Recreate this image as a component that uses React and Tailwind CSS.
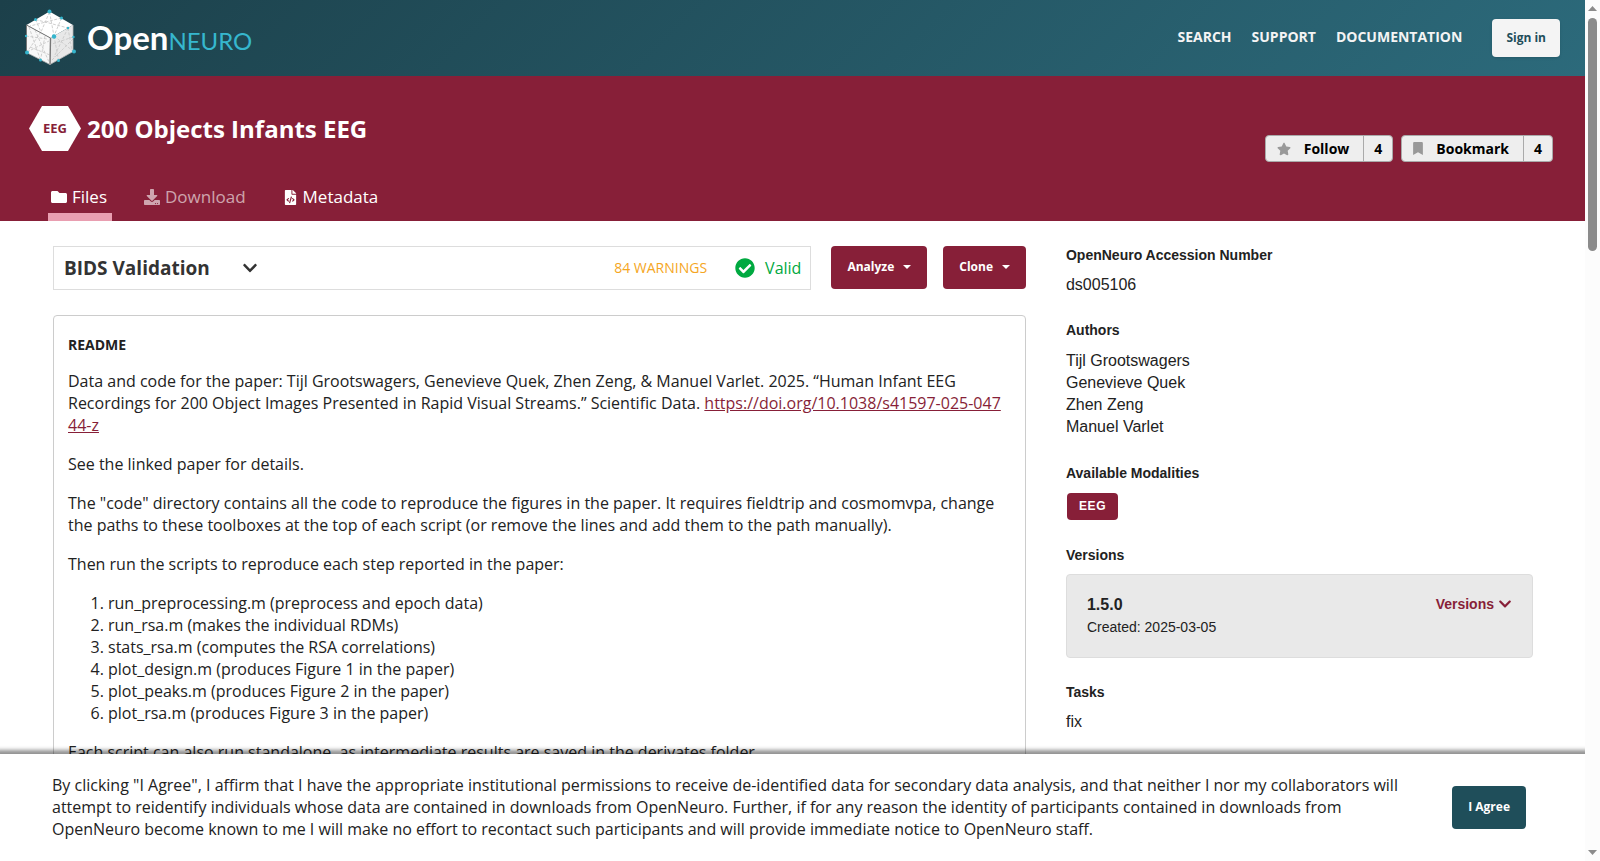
import React from 'react';
import { useState } from 'react';
import {
    FaBookmark,
    FaCheckCircle,
    FaChevronDown,
    FaDownload,
    FaFileCode,
    FaFolder,
    FaStar,
} from 'react-icons/fa';

const NAV_LINKS = ['SEARCH', 'SUPPORT', 'DOCUMENTATION'];

const AUTHORS = ['Tijl Grootswagers', 'Genevieve Quek', 'Zhen Zeng', 'Manuel Varlet'];

const SCRIPTS = [
    'run_preprocessing.m (preprocess and epoch data)',
    'run_rsa.m (makes the individual RDMs)',
    'stats_rsa.m (computes the RSA correlations)',
    'plot_design.m (produces Figure 1 in the paper)',
    'plot_peaks.m (produces Figure 2 in the paper)',
    'plot_rsa.m (produces Figure 3 in the paper)',
];

const CUBE_NODES = [
    [24.5, 2.5, 2],
    [10.5, 10.5, 1.5],
    [36.5, 9, 1.5],
    [43, 19, 1.2],
    [29, 27.5, 2.2],
    [1, 27, 1.2],
    [48.5, 28, 1.2],
    [2, 43.5, 2],
    [49, 42.5, 2],
    [15.5, 51, 1.5],
    [33.5, 51.5, 1.5],
];

const LogoCube = () => (
    <svg width="52" height="58" viewBox="0 0 52 58" aria-hidden="true">
        <path d="M24.5 2.5 48 16 25.5 29 1.5 16z" fill="#ffffff" />
        <path d="M1.5 16 25.5 29 25 55.5 1.5 43.5z" fill="#f8f8f8" />
        <path d="M48 16 25.5 29 25 55.5 48 42.5z" fill="#e8e8e8" />
        <path
            d="M24.5 3 16 23M24.5 3 29 27M10.5 10.5 43 19M10.5 10.5 16 23M36.5 9 5 17M36.5 9 29 27M1 27 22 30M4 18 15.5 51M16 23 2 43M20 27 15.5 51M2 43 24 32M5 38 25 46M10 21 24 53M29 27 33.5 51M43 19 29 48M29 27 48 42M48 28 27 35M43 19 47 42M27 51 48 30"
            fill="none"
            stroke="#c9c9c9"
            strokeWidth="0.9"
            strokeDasharray="3 1.5"
        />
        <path d="M1.5 43.5V16L25.5 29" fill="none" stroke="#777777" strokeWidth="1" />
        <path d="M25.5 29 25 55.5" fill="none" stroke="#777777" strokeWidth="1.4" />
        <path d="M1.5 43.5 25 55.5 48 42.5V16" fill="none" stroke="#b5b5b5" strokeWidth="0.8" />
        {CUBE_NODES.map(([cx, cy, r]) => (
            <circle key={`${cx}-${cy}`} cx={cx} cy={cy} r={r} fill="#34b5cd" />
        ))}
    </svg>
);

const Header = () => (
    <header className="flex h-[76px] shrink-0 items-center justify-between bg-[linear-gradient(135deg,#1c404a,#2c6a7b)] px-[25px]">
        <a href="#home" className="flex items-center" aria-label="OpenNeuro">
            <LogoCube />
            <span className="ml-[10px] flex items-baseline pb-0.5 font-['Lato',sans-serif] leading-10">
                <span className="text-[33px] font-bold text-white">Open</span>
                <span className="text-2xl text-[#36b7ce]">NEURO</span>
            </span>
        </a>
        <nav className="flex items-center gap-5 text-sm font-bold text-[#f4f4f4]">
            {NAV_LINKS.map((link) => (
                <a key={link} href={`#${link.toLowerCase()}`} className="pb-0.5">
                    {link}
                </a>
            ))}
            <button
                type="button"
                className="ml-[10px] h-[38px] cursor-pointer rounded bg-[#f4f4f4] px-[14px] text-xs font-bold text-[#1f4e5a] shadow"
            >
                Sign in
            </button>
        </nav>
    </header>
);

const CountButton = ({ icon, label, count }) => (
    <button
        type="button"
        className="flex h-[27px] cursor-pointer items-stretch rounded border border-[#aaaaaa] bg-[#eeeeee] text-sm font-bold text-black"
    >
        <span className="flex items-center gap-[13px] pl-[11px] pr-[14px]">
            <span className="text-[#999999]">{icon}</span>
            {label}
        </span>
        <span className="flex items-center border-l border-[#aaaaaa] px-[10px]">{count}</span>
    </button>
);

const Tab = ({ icon, label, active, muted }) => (
    <li>
        <a
            href={`#${label.toLowerCase()}`}
            className={`flex h-9 items-start gap-[5px] border-b-8 pl-[3px] pr-[5px] text-[17px] leading-6 ${
                active ? 'border-[#e99fb1]' : 'border-transparent'
            } ${muted ? 'text-white/60' : 'text-white'}`}
        >
            <span className="flex h-6 items-center text-base">{icon}</span>
            {label}
        </a>
    </li>
);

const DatasetHeader = () => (
    <section className="bg-[#871f38] text-white">
        <div className="flex h-[109px] items-start justify-between pl-[29px] pr-8">
            <div className="mt-[30px] flex items-center gap-[6px]">
                <span className="flex h-[45px] w-[52px] items-center justify-center bg-white text-[13px] font-bold text-[#871f38] [clip-path:polygon(25%_0,75%_0,100%_50%,75%_100%,25%_100%,0_50%)]">
                    EEG
                </span>
                <h1 className="text-2xl font-bold">200 Objects Infants EEG</h1>
            </div>
            <div className="mt-[59px] flex gap-2">
                <CountButton icon={<FaStar size={14} />} label="Follow" count={4} />
                <CountButton icon={<FaBookmark className="h-[13px] w-[10px]" />} label="Bookmark" count={4} />
            </div>
        </div>
        <ul className="flex gap-[29px] pl-12">
            <Tab icon={<FaFolder />} label="Files" active />
            <Tab icon={<FaDownload />} label="Download" muted />
            <Tab icon={<FaFileCode size={15} />} label="Metadata" />
        </ul>
    </section>
);

const MenuButton = ({ label }) => (
    <button
        type="button"
        className="flex h-[43px] shrink-0 cursor-pointer items-center gap-[9px] rounded bg-[#871f38] px-4 pb-0.5 text-xs font-bold text-white"
    >
        {label}
        <svg width="8" height="4" viewBox="0 0 8 4" aria-hidden="true">
            <path d="M0 0H8L4 4z" fill="currentColor" />
        </svg>
    </button>
);

const ValidationRow = () => (
    <div className="flex items-start">
        <div className="flex h-11 flex-1 items-center border border-[#dddddd] pl-[10px] pr-[9px]">
            <button type="button" className="flex cursor-pointer items-center gap-8 text-[19px] font-bold text-[#333333]">
                BIDS Validation
                <FaChevronDown size={16} />
            </button>
            <span className="ml-auto text-sm text-[#f5a623]">84 WARNINGS</span>
            <span className="ml-7 flex items-center gap-[10px] text-base text-[#00a940]">
                <FaCheckCircle size={20} />
                Valid
            </span>
        </div>
        <div className="ml-5 flex gap-4">
            <MenuButton label="Analyze" />
            <MenuButton label="Clone" />
        </div>
    </div>
);

const Readme = () => (
    <article className="mt-[25px] rounded border border-[#cccccc] pt-[19px] pr-5 pb-10 pl-[14px] leading-[22px]">
        <h2 className="text-sm font-bold leading-5">README</h2>
        <div className="mt-[15px] space-y-[17px]">
            <p>
                Data and code for the paper: Tijl Grootswagers, Genevieve Quek, Zhen Zeng, &amp; Manuel Varlet. 2025.
                “Human Infant EEG Recordings for 200 Object Images Presented in Rapid Visual Streams.” Scientific
                Data.{' '}
                <a href="https://doi.org/10.1038/s41597-025-04744-z" className="break-all text-[#871f38] underline">
                    https://doi.org/10.1038/s41597-025-04744-z
                </a>
            </p>
            <p>See the linked paper for details.</p>
            <p>
                The "code" directory contains all the code to reproduce the figures in the paper. It requires fieldtrip
                and cosmomvpa, change the paths to these toolboxes at the top of each script (or remove the lines and
                add them to the path manually).
            </p>
            <p>Then run the scripts to reproduce each step reported in the paper:</p>
            <ol className="list-decimal pl-10">
                {SCRIPTS.map((script) => (
                    <li key={script}>{script}</li>
                ))}
            </ol>
            <p>Each script can also run standalone, as intermediate results are saved in the derivates folder.</p>
        </div>
    </article>
);

const MetaBlock = ({ title, children }) => (
    <section>
        <h2 className="mb-[10px] text-sm font-bold leading-[18px]">{title}</h2>
        {children}
    </section>
);

const Sidebar = () => (
    <aside className="flex flex-col gap-[25px] font-['Liberation_Sans',Arial,sans-serif] leading-[22px]">
        <MetaBlock title="OpenNeuro Accession Number">
            <p>ds005106</p>
        </MetaBlock>
        <MetaBlock title="Authors">
            <ul className="py-px">
                {AUTHORS.map((author) => (
                    <li key={author}>{author}</li>
                ))}
            </ul>
        </MetaBlock>
        <MetaBlock title="Available Modalities">
            <div className="flex p-px">
                <a
                    href="#eeg"
                    className="rounded bg-[#871f38] px-3 text-xs font-bold leading-[27px] tracking-wider text-white"
                >
                    EEG
                </a>
            </div>
        </MetaBlock>
        <MetaBlock title="Versions">
            <div className="flex items-start justify-between rounded border border-[#dddddd] bg-[#e9e9e9] px-5 py-[19px]">
                <div>
                    <p className="font-bold">1.5.0</p>
                    <p className="text-sm leading-[22px]">Created: 2025-03-05</p>
                </div>
                <button
                    type="button"
                    className="flex cursor-pointer items-center gap-1 text-sm font-bold text-[#871f38]"
                >
                    Versions
                    <FaChevronDown size={14} />
                </button>
            </div>
        </MetaBlock>
        <MetaBlock title="Tasks">
            <p>fix</p>
        </MetaBlock>
    </aside>
);

const AgreementBar = ({ onAgree }) => (
    <footer className="relative z-10 flex shrink-0 items-center justify-between bg-white pt-5 pr-[59px] pb-[21px] pl-[52px] shadow-[0_0_4px_4px_rgba(0,0,0,0.43)]">
        <p className="max-w-[1350px] leading-[22px]">
            By clicking "I Agree", I affirm that I have the appropriate institutional permissions to receive
            de-identified data for secondary data analysis, and that neither I nor my collaborators will attempt to
            reidentify individuals whose data are contained in downloads from OpenNeuro. Further, if for any reason the
            identity of participants contained in downloads from OpenNeuro become known to me I will make no effort to
            recontact such participants and will provide immediate notice to OpenNeuro staff.
        </p>
        <button
            type="button"
            onClick={onAgree}
            className="h-[43px] shrink-0 cursor-pointer rounded bg-[#1f4e5a] px-4 text-xs font-bold text-white"
        >
            I Agree
        </button>
    </footer>
);

const ScrollTrack = () => (
    <div className="relative z-20 flex w-[15px] shrink-0 flex-col items-center bg-[#fcfcfc] py-[6px]" aria-hidden="true">
        <svg width="9" height="5" viewBox="0 0 9 5">
            <path d="M4.5 0 9 5H0z" fill="#8b8b8b" />
        </svg>
        <span className="mt-[7px] h-[233px] w-[9px] rounded-full bg-[#8b8b8b]" />
        <svg width="9" height="5" viewBox="0 0 9 5" className="mt-auto">
            <path d="M0 0H9L4.5 5z" fill="#8b8b8b" />
        </svg>
    </div>
);

const App = () => {

    const [agreed, setAgreed] = useState(false);

    return (
        <div className="flex h-screen bg-white font-['Open_Sans',sans-serif] text-base text-[#222222]">
            <div className="flex min-w-0 flex-1 flex-col">
                <div className="min-h-0 flex-1 overflow-hidden">
                    <Header />
                    <DatasetHeader />
                    <main className="grid grid-cols-[25fr_12fr] gap-10 pt-[25px] pl-[53px] pr-[52px]">
                        <div className="min-w-0">
                            <ValidationRow />
                            <Readme />
                        </div>
                        <Sidebar />
                    </main>
                </div>
                {!agreed && <AgreementBar onAgree={() => setAgreed(true)} />}
            </div>
            <ScrollTrack />
        </div>
    );
}

export default App;
